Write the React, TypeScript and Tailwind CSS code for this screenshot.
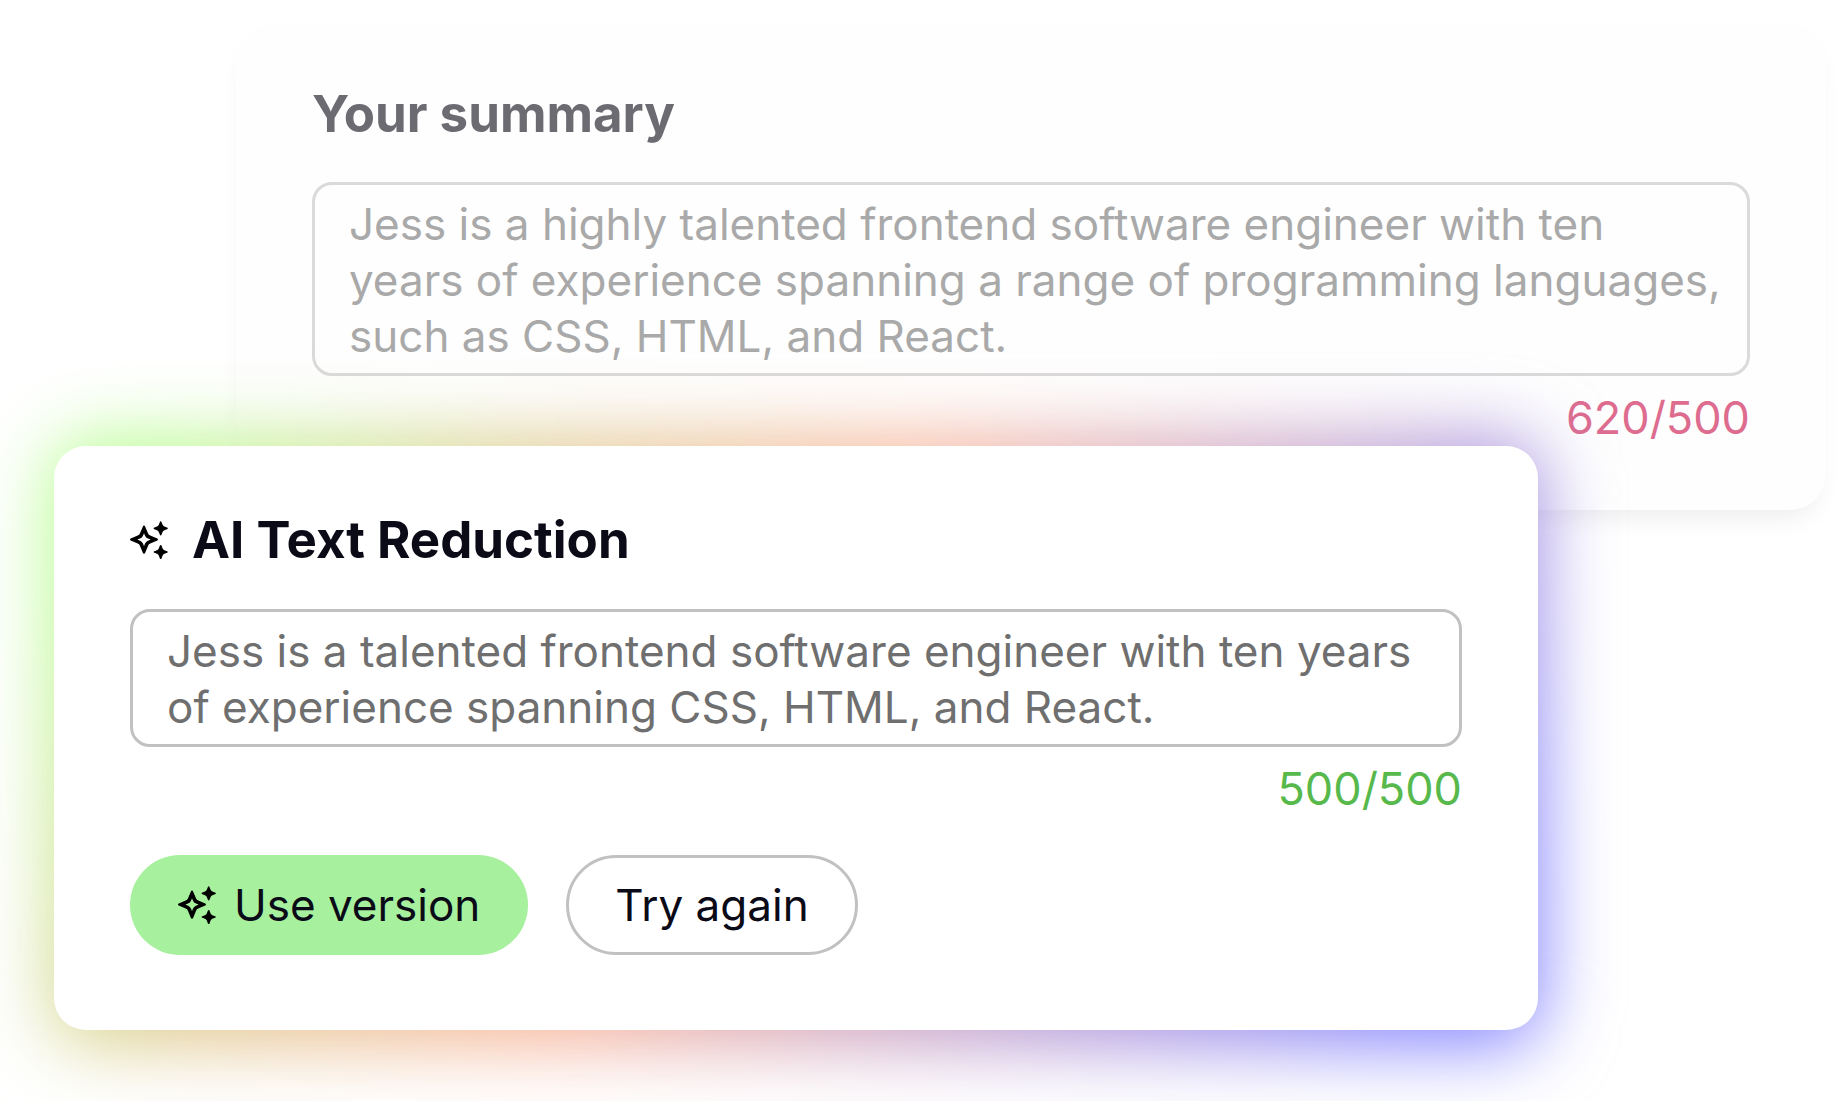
import { useState } from 'react'

function Sparkles() {
  return (
    <svg viewBox="0 0 38 38" className="size-[38px] shrink-0" fill="#000" aria-hidden="true">
      <path
        fillRule="evenodd"
        d="M14 4.600q.8 0 1.100.8l3 7q.6 1.600 2.200 2.200l7 3q.7.300.7 1t-.7 1l-7 3q-1.600.6-2.200 2.200l-3 7.200q-.3.800-1.100.800t-1.100-.8l-3-7.200q-.6-1.600-2.200-2.200L.7 19.600q-.7-.3-.7-1t.7-1l7-3q1.600-.6 2.200-2.200l3-7q.3-.8 1.100-.8zM14 12.200l-.9 2.200q-.9 2.200-3.100 3.100l-2.700 1.100 2.700 1.100q2.200.9 3.100 3.100l.9 2.400.9-2.400q.9-2.200 3.100-3.100l2.700-1.100-2.700-1.100q-2.200-.9-3.100-3.100z"
      />
      <path d="M30.700.3q.6 0 .9.900l1 2.600q.5 1.300 1.800 1.800l2.600 1q.8.3.8.8t-.8.8l-2.600 1q-1.300.5-1.800 1.800l-1 2.600q-.3.900-.9.900t-.9-.9l-1-2.600q-.5-1.300-1.800-1.800l-2.600-1q-.8-.3-.8-.8t.8-.8l2.600-1q1.300-.5 1.800-1.800l1-2.600q.3-.9.900-.9z" />
      <path d="M30.700 23.900q.6 0 .9.900l1 2.600q.5 1.300 1.800 1.800l2.600 1q.8.3.8.8t-.8.8l-2.600 1q-1.300.5-1.800 1.800l-1 2.600q-.3.900-.9.900t-.9-.9l-1-2.600q-.5-1.300-1.800-1.800l-2.600-1q-.8-.3-.8-.8t.8-.8l2.600-1q1.300-.5 1.800-1.800l1-2.600q.3-.9.900-.9z" />
    </svg>
  )
}

const titleCls = 'text-[51px] leading-[64px] font-bold'
const fieldCls = 'block w-full resize-none overflow-hidden rounded-[20px] border-[3px] bg-transparent pt-[11px] pr-4 pb-[9px] pl-[34px] text-[44px] leading-[56px] outline-none'
const countCls = 'mt-[14px] text-right text-[45px] leading-[56px]'

export default function App() {
  const [summary, setSummary] = useState(
    'Jess is a highly talented frontend software engineer with ten\nyears of experience spanning a range of programming languages,\nsuch as CSS, HTML, and React.',
  )
  const [reduced, setReduced] = useState(
    'Jess is a talented frontend software engineer with ten years\nof experience spanning CSS, HTML, and React.',
  )

  return (
    <main className="min-h-screen overflow-hidden bg-white pt-6 pb-[70px] font-['Inter',sans-serif]">
      <section className="mr-[22px] ml-[236px] rounded-[36px] bg-[#fefefe] px-[76px] pt-[58px] pb-16 shadow-[0_16px_28px_-12px_rgba(0,0,0,0.09)]">
        <h2 className={`${titleCls} text-[#6c6b72]`}>
          <label htmlFor="summary">Your summary</label>
        </h2>
        <textarea
          id="summary"
          rows={3}
          value={summary}
          onChange={e => setSummary(e.target.value)}
          className={`${fieldCls} mt-9 border-[#dadada] text-[#a9a9a9]`}
        />
        <p className={`${countCls} text-[#dd6c8f]`}>620/500</p>
      </section>

      <section className="relative z-0 mr-[310px] ml-[54px] -mt-16">
        <div className="absolute -inset-x-1 -top-2 -bottom-4 -z-10 rounded-[40px] bg-[linear-gradient(124deg,#b8fc90_7%,#e0ca90_27%,#f8b49a_47%,#8484ff_92%)] blur-[36px]" />
        <div className="rounded-[32px] bg-white px-[76px] pt-[62px] pb-[75px]">
          <h2 className={`${titleCls} flex items-center gap-6 text-[#0b0a17]`}>
            <Sparkles />
            <label htmlFor="reduced">AI Text Reduction</label>
          </h2>
          <textarea
            id="reduced"
            rows={2}
            value={reduced}
            onChange={e => setReduced(e.target.value)}
            className={`${fieldCls} mt-[37px] border-[#c1c1c1] text-[#6f6f6f]`}
          />
          <p className={`${countCls} text-[#57b94b]`}>500/500</p>
          <div className="mt-[38px] flex gap-[38px] text-[44px] leading-[56px] text-[#0b0a17]">
            <button className="flex h-[100px] items-center gap-[18px] rounded-full bg-[#a6f09e] px-12">
              <Sparkles />
              Use version
            </button>
            <button className="h-[100px] rounded-full border-[3px] border-[#c1c1c1] bg-white px-[46px]">Try again</button>
          </div>
        </div>
      </section>
    </main>
  )
}
